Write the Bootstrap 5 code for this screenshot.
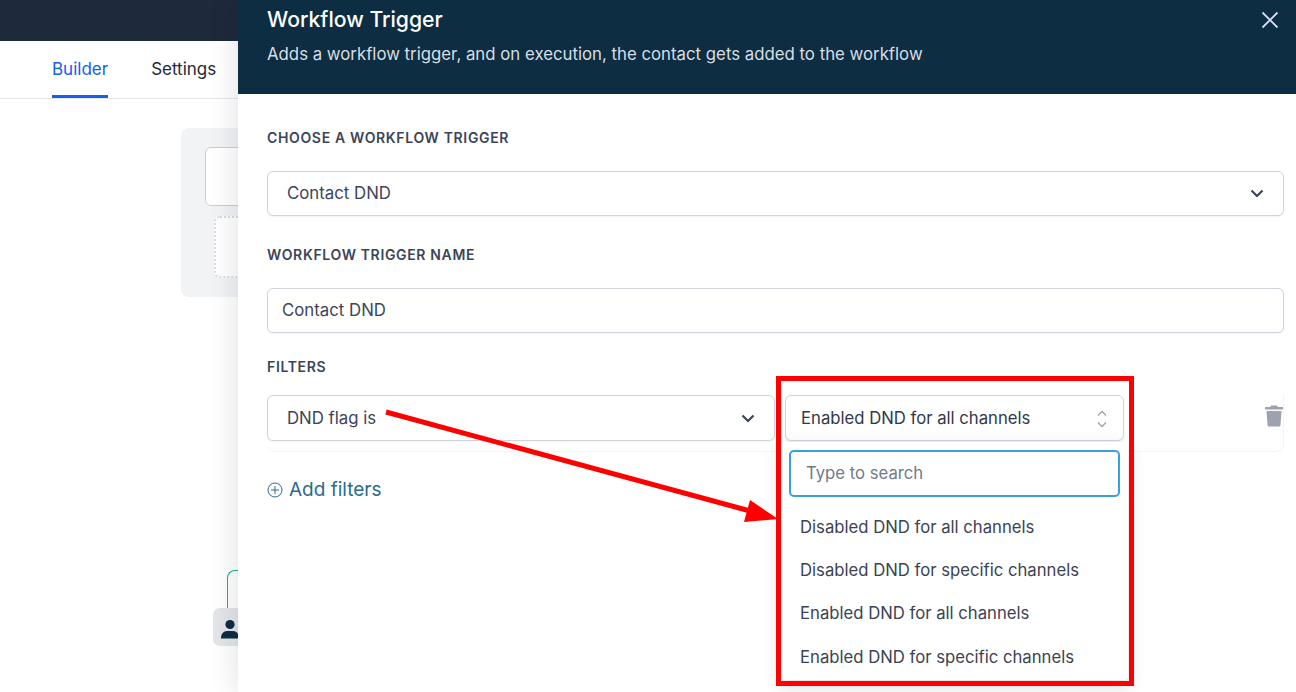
<!DOCTYPE html>
<html lang="en">
<head>
    <meta charset="UTF-8">
    <meta name="viewport" content="width=device-width, initial-scale=1.0">
    <title>Workflow Trigger</title>
    <link rel="stylesheet" href="https://cdn.jsdelivr.net/npm/bootstrap@5.3.0/dist/css/bootstrap.min.css">
    <style>
        html, body {
            height: 100%;
            overflow: hidden;
        }
        body {
            background-color: #fff;
            font-family: Inter, "Liberation Sans", sans-serif;
            color: #374151;
        }
        .top-strip {
            height: 41px;
            background-color: #1e293b;
        }
        .tab-strip {
            height: 58px;
            border-bottom: 1px solid #e5e7eb;
            padding-left: 52px;
            gap: 43px;
        }
        .tab-link {
            font-size: 17px;
            line-height: 56px;
            height: 57px;
            color: #1f2937;
        }
        .tab-active {
            color: #155eef;
            border-bottom: 3px solid #155eef;
        }
        /* workflow canvas behind the drawer */
        .wf-canvas {
            position: relative;
            height: 593px;
        }
        .wf-group {
            position: absolute;
            left: 181px;
            top: 29px;
            width: 200px;
            height: 169px;
            background-color: #f2f3f5;
            border-radius: 8px;
        }
        .wf-node {
            position: absolute;
            left: 24px;
            top: 19px;
            width: 150px;
            height: 59px;
            background-color: #fff;
            border: 1px solid #c9ccd3;
            border-radius: 6px;
        }
        .wf-drop {
            position: absolute;
            left: 33px;
            top: 88px;
            width: 150px;
            height: 62px;
            background-color: #fff;
            border: 2px dotted #d9dbe0;
            border-radius: 6px;
        }
        .wf-line {
            position: absolute;
            left: 227px;
            top: 471px;
            width: 40px;
            height: 40px;
            border-left: 1px solid #17b57f;
            border-top: 1px solid #17b57f;
            border-top-left-radius: 8px;
        }
        .wf-avatar {
            position: absolute;
            left: 213px;
            top: 509px;
            width: 38px;
            height: 38px;
            background-color: #e3e5e9;
            border-radius: 7px;
            padding: 8px 0 0 7px;
        }
        /* drawer */
        .wf-drawer {
            position: absolute;
            left: 238px;
            top: 0;
            bottom: 0;
            right: 0;
            background-color: #fff;
            box-shadow: 0 0 28px rgba(17, 24, 39, .14);
        }
        .drawer-head {
            height: 94px;
            background-color: #0d2d42;
            padding: 5px 29px 0;
            position: relative;
        }
        .drawer-title {
            font-size: 21.2px;
            font-weight: 500;
            line-height: 28px;
            color: #fff;
            margin: 0;
        }
        .drawer-sub {
            font-size: 16.8px;
            line-height: 24px;
            color: #d8dee3;
            margin: 8px 0 0;
            padding-top: 1px;
        }
        .drawer-close {
            position: absolute;
            right: 17px;
            top: 11px;
            width: 18px;
            height: 18px;
        }
        .drawer-body {
            padding: 35px 12px 0 29px;
        }
        .field-label {
            font-size: 14px;
            font-weight: 600;
            line-height: 18px;
            letter-spacing: .65px;
            text-transform: uppercase;
            color: #3b4557;
            margin: 0;
        }
        .field-box {
            border: 1px solid #d1d3db;
            border-radius: 6px;
            background-color: #fff;
            box-shadow: 0 1px 2px rgba(17, 24, 39, .05);
            font-size: 16.8px;
            color: #3b4557;
        }
        .box-main {
            height: 45px;
            padding: 0 19px;
            margin-top: 24px;
        }
        .box-input {
            height: 45px;
            padding: 0 14px;
            margin-top: 24px;
        }
        .name-label {
            margin-top: 30px;
        }
        .filter-label {
            margin-top: 25px;
        }
        .filter-wrap {
            margin-top: 19px;
            height: 57px;
            border-bottom: 1px solid #f3f4f6;
            border-right: 1px solid #f3f4f6;
            border-radius: 0 0 8px 8px;
            position: relative;
        }
        .box-left {
            width: 508px;
            height: 46px;
            padding: 1px 19px 0;
        }
        .box-right {
            width: 339px;
            height: 46px;
            margin-left: 10px;
            padding: 1px 15px 0;
            color: #2f3848;
            font-size: 16.7px;
        }
        .trash-icon {
            position: absolute;
            right: -1px;
            top: 9px;
        }
        .add-filters {
            margin-top: 26px;
            font-size: 19px;
            line-height: 24px;
            color: #2b6a8e;
            gap: 6px;
        }
        /* open dropdown, over the form */
        .dd-menu {
            position: absolute;
            left: 780px;
            top: 442px;
            width: 348px;
            height: 238px;
            background-color: #fff;
            box-shadow: 0 6px 16px rgba(17, 24, 39, .16);
            padding: 8px 8px 0 9px;
        }
        .dd-search {
            height: 47px;
            border: 2px solid #3aa0dc;
            border-radius: 5px;
            font-size: 16.7px;
            line-height: 43px;
            padding-left: 15px;
            color: #717a8a;
        }
        .dd-item {
            font-size: 16.7px;
            line-height: 24px;
            color: #3b4252;
            padding: 0 0 0 11px;
            margin-top: 19.4px;
        }
        .dd-search + .dd-item {
            margin-top: 17.500px;
        }
        .callout-box {
            position: absolute;
            left: 776px;
            top: 376px;
            width: 358px;
            height: 310px;
            border: 5px solid #ff0000;
        }
        .callout-arrow {
            position: absolute;
            left: 0;
            top: 0;
        }
    </style>
</head>
<body>
    <div class="top-strip"></div>
    <div class="tab-strip d-flex">
        <div class="tab-link tab-active">Builder</div>
        <div class="tab-link">Settings</div>
    </div>

    <!-- Canvas behind drawer -->
    <div class="wf-canvas">
        <div class="wf-group">
            <div class="wf-node"></div>
            <div class="wf-drop"></div>
        </div>
        <div class="wf-line"></div>
        <div class="wf-avatar">
            <svg width="24" height="22" viewBox="0 0 24 22">
                <circle cx="10" cy="5.5" r="4.6" fill="#0d2d42"/>
                <path d="M1 19c0-4 2.500-7 6-7h6c3.500 0 6 3 6 7v0.500H1z" fill="#0d2d42"/>
            </svg>
        </div>
    </div>

    <!-- Drawer -->
    <div class="wf-drawer">
        <div class="drawer-head">
            <h5 class="drawer-title">Workflow Trigger</h5>
            <p class="drawer-sub">Adds a workflow trigger, and on execution, the contact gets added to the workflow</p>
            <svg class="drawer-close" viewBox="0 0 18 18">
                <path d="M1.500 1.500l15 15M16.500 1.500l-15 15" stroke="#d5dcf5" stroke-width="1.800" fill="none"/>
            </svg>
        </div>
        <div class="drawer-body">
            <p class="field-label">Choose a workflow trigger</p>
            <div class="field-box box-main d-flex align-items-center justify-content-between">
                <span>Contact DND</span>
                <svg width="14" height="9" viewBox="0 0 14 9">
                    <path d="M1.500 1.500L7 7l5.500-5.500" stroke="#3b4557" stroke-width="2.200" fill="none"/>
                </svg>
            </div>

            <p class="field-label name-label">Workflow trigger name</p>
            <div class="field-box box-input d-flex align-items-center"><span>Contact DND</span></div>

            <p class="field-label filter-label">Filters</p>
            <div class="filter-wrap d-flex">
                <div class="field-box box-left d-flex align-items-center justify-content-between">
                    <span>DND flag is</span>
                    <svg width="14" height="9" viewBox="0 0 14 9">
                        <path d="M1.500 1.500L7 7l5.500-5.500" stroke="#3b4557" stroke-width="2.200" fill="none"/>
                    </svg>
                </div>
                <div class="field-box box-right d-flex align-items-center justify-content-between">
                    <span>Enabled DND for all channels</span>
                    <svg width="12" height="20" viewBox="0 0 12 20">
                        <path d="M2 6.500l4-4 4 4M2 13.500l4 4 4-4" stroke="#9ca3af" stroke-width="1.300" fill="none"/>
                    </svg>
                </div>
                <svg class="trash-icon" width="20" height="23" viewBox="0 0 20 23">
                    <path d="M7 1.500h6l1 1.500h5v2.500H1V3h5z" fill="#9ca3af"/>
                    <path d="M2.500 7h15l-1 14c0 .8-.7 1.500-1.500 1.500H5c-.8 0-1.500-.7-1.500-1.500z" fill="#9ca3af"/>
                </svg>
            </div>

            <div class="add-filters d-flex align-items-center">
                <svg width="16" height="16" viewBox="0 0 16 16">
                    <circle cx="8" cy="8" r="7" stroke="#2b6a8e" stroke-width="1" fill="none"/>
                    <path d="M8 4v8M4 8h8" stroke="#2b6a8e" stroke-width="1" fill="none"/>
                </svg>
                <span>Add filters</span>
            </div>
        </div>
    </div>

    <!-- Open dropdown -->
    <div class="dd-menu">
        <div class="dd-search">Type to search</div>
        <div class="dd-item">Disabled DND for all channels</div>
        <div class="dd-item">Disabled DND for specific channels</div>
        <div class="dd-item">Enabled DND for all channels</div>
        <div class="dd-item">Enabled DND for specific channels</div>
    </div>

    <!-- Red annotation -->
    <div class="callout-box"></div>
    <svg class="callout-arrow" width="1296" height="692" viewBox="0 0 1296 692">
        <path d="M386 412L750 511" stroke="#ff0000" stroke-width="5" fill="none"/>
        <path d="M778 519L744 522L750 500z" fill="#ff0000"/>
    </svg>

    <script src="https://cdn.jsdelivr.net/npm/bootstrap@5.3.0/dist/js/bootstrap.bundle.min.js"></script>
</body>
</html>
